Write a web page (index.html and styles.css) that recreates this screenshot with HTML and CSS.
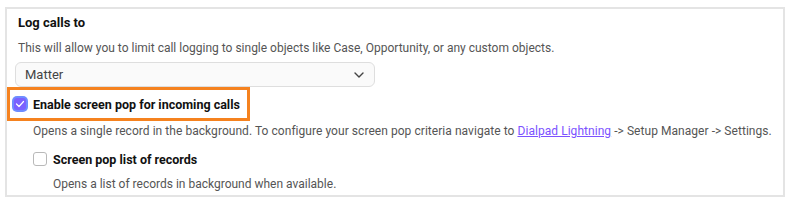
FILE: index.html
```html
<!DOCTYPE html>
<html lang="en">
<head>
    <meta charset="UTF-8">
    <title>Call logging settings</title>
    <link rel="stylesheet" href="styles.css">
</head>
<body>
    <div class="panel">
        <div class="title">Log calls to</div>
        <div class="desc">This will allow you to limit call logging to single objects like Case, Opportunity, or any custom objects.</div>
        <div class="select">
            <span>Matter</span>
            <svg class="chevron" width="10" height="6" viewBox="0 0 10 6"><path d="M1 1l4 4 4-4" fill="none" stroke="#444" stroke-width="1.4" stroke-linecap="round" stroke-linejoin="round"/></svg>
        </div>

        <div class="highlight">
            <span class="check checked">
                <svg width="10" height="8" viewBox="0 0 10 8"><path d="M1.5 4l2.5 2.5 4.5-5" fill="none" stroke="#fff" stroke-width="1.2" stroke-linecap="round" stroke-linejoin="round"/></svg>
            </span>
            <span class="label">Enable screen pop for incoming calls</span>
        </div>
        <div class="desc sub">Opens a single record in the background. To configure your screen pop criteria navigate to <a href="#">Dialpad Lightning</a> -&gt; Setup Manager -&gt; Settings.</div>

        <div class="option">
            <span class="check"></span>
            <span class="label">Screen pop list of records</span>
        </div>
        <div class="desc subsub">Opens a list of records in background when available.</div>
    </div>
</body>
</html>
```

FILE: styles.css
```css
body {
    margin: 0;
    padding: 7px 0 0 5px;
    font-family: Roboto, "Liberation Sans", sans-serif;
    font-size: 13px;
    font-variant-ligatures: none;
    color: #222;
    background: #fff;
}

.panel {
    width: 776px;
    height: 182px;
    border: 2px solid #e4e4e4;
    padding-top: 4px;
    box-sizing: content-box;
    overflow: hidden;
}

.title {
    font-weight: 700;
    line-height: 20px;
    margin-left: 11px;
    color: #111;
}

.desc {
    font-size: 12px;
    line-height: 20px;
    margin: 5px 0 0 11px;
    color: #555;
    white-space: nowrap;
}

.select {
    display: flex;
    align-items: center;
    justify-content: space-between;
    width: 360px;
    height: 25px;
    margin: 4px 0 0 8px;
    padding: 0 10px 0 9px;
    box-sizing: border-box;
    border: 1px solid #dedede;
    border-radius: 6px;
    background: #fafafa;
    color: #444;
}

.chevron {
    margin-top: 1px;
}

.highlight {
    display: flex;
    align-items: center;
    gap: 5px;
    width: 243px;
    height: 34px;
    padding-left: 2px;
    box-sizing: border-box;
    border: 3px solid #f5821f;
    font-size: 12.5px;
    font-weight: 700;
    color: #111;
    white-space: nowrap;
}

.check {
    display: inline-flex;
    align-items: center;
    justify-content: center;
    width: 14px;
    height: 14px;
    box-sizing: border-box;
    border: 1px solid #b9b9b9;
    border-radius: 3px;
    background: #fff;
}

.check.checked {
    width: 12px;
    height: 12px;
    margin: 2px;
    border: none;
    background: #7b61ff;
    box-shadow: 0 0 0 2px #6e8cff;
}

.desc.sub {
    margin: 0 0 0 26px;
    letter-spacing: 0.05px;
}

.desc a {
    color: #7c52ff;
    text-decoration: underline;
}

.option {
    display: flex;
    align-items: center;
    gap: 6px;
    height: 20px;
    margin: 8px 0 0 26px;
    font-size: 12.5px;
    font-weight: 700;
    color: #111;
    white-space: nowrap;
}

.desc.subsub {
    margin: 5px 0 0 46px;
}
```
